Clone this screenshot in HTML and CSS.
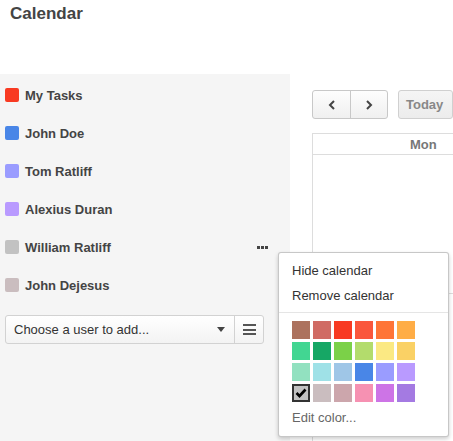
FILE: index.html
```html
<!DOCTYPE html>
<html>
<head>
<meta charset="utf-8">
<link rel="stylesheet" href="styles.css">
</head>
<body>
<div class="app">
  <header class="header"><h1 class="title">Calendar</h1></header>
  <div class="main">
    <aside class="sidebar">
      <div class="cal-row"><span class="swatch" style="background:#f83a22"></span><span class="name">My Tasks</span></div>
      <div class="cal-row"><span class="swatch" style="background:#4986e7"></span><span class="name">John Doe</span></div>
      <div class="cal-row"><span class="swatch" style="background:#9a9cff"></span><span class="name">Tom Ratliff</span></div>
      <div class="cal-row"><span class="swatch" style="background:#b99aff"></span><span class="name">Alexius Duran</span></div>
      <div class="cal-row"><span class="swatch" style="background:#c2c2c2"></span><span class="name">William Ratliff</span><span class="dots"><i></i><i></i><i></i></span></div>
      <div class="cal-row"><span class="swatch" style="background:#cabdbf"></span><span class="name">John Dejesus</span></div>
      <div class="picker">
        <div class="picker-select"><span class="picker-text">Choose a user to add...</span><span class="caret"></span></div>
        <div class="picker-btn"><span class="burger"><i></i><i></i><i></i></span></div>
      </div>
    </aside>
    <section class="content">
      <div class="toolbar">
        <div class="nav-group">
          <button class="nav-btn"><svg width="8" height="10" viewBox="0 0 8 10"><path d="M6 1 L2 5 L6 9" fill="none" stroke="#444" stroke-width="2"/></svg></button>
          <button class="nav-btn"><svg width="8" height="10" viewBox="0 0 8 10"><path d="M2 1 L6 5 L2 9" fill="none" stroke="#444" stroke-width="2"/></svg></button>
        </div>
        <button class="today">Today</button>
      </div>
      <div class="grid">
        <div class="grid-head"><span class="day">Mon</span></div>
        <div class="grid-row"></div>
        <div class="grid-row2"></div>
      </div>
    </section>
  </div>
  <div class="menu">
    <div class="menu-item">Hide calendar</div>
    <div class="menu-item">Remove calendar</div>
    <div class="menu-sep"></div>
    <div class="colors">
      <span class="c" style="background:#ac725e"></span>
      <span class="c" style="background:#d06b64"></span>
      <span class="c" style="background:#f83a22"></span>
      <span class="c" style="background:#fa573c"></span>
      <span class="c" style="background:#ff7537"></span>
      <span class="c" style="background:#ffad46"></span>
      <span class="c" style="background:#42d692"></span>
      <span class="c" style="background:#16a765"></span>
      <span class="c" style="background:#7bd148"></span>
      <span class="c" style="background:#b3dc6c"></span>
      <span class="c" style="background:#fbe983"></span>
      <span class="c" style="background:#fad165"></span>
      <span class="c" style="background:#92e1c0"></span>
      <span class="c" style="background:#9fe1e7"></span>
      <span class="c" style="background:#9fc6e7"></span>
      <span class="c" style="background:#4986e7"></span>
      <span class="c" style="background:#9a9cff"></span>
      <span class="c" style="background:#b99aff"></span>
      <span class="c selected" style="background:#c2c2c2"><svg width="12" height="10" viewBox="0 0 12 10"><path d="M1.5 5 L4.5 8 L10.5 1.5" fill="none" stroke="#000" stroke-width="2.6"/></svg></span>
      <span class="c" style="background:#cabdbf"></span>
      <span class="c" style="background:#cca6ac"></span>
      <span class="c" style="background:#f691b2"></span>
      <span class="c" style="background:#cd74e6"></span>
      <span class="c" style="background:#a47ae2"></span>
    </div>
    <div class="menu-item edit">Edit color...</div>
  </div>
</div>
</body>
</html>
```
FILE: styles.css
```css
* { box-sizing: border-box; }
html, body { margin: 0; padding: 0; }
body {
  font-family: "Liberation Sans", Arial, sans-serif;
  font-size: 13px;
  color: #333;
  background: #fff;
  width: 453px;
  height: 441px;
  overflow: hidden;
}
.app { position: relative; width: 453px; height: 441px; display: flex; flex-direction: column; }
.header { height: 74px; padding: 4px 0 0 10px; }
.title { margin: 0; font-size: 17px; font-weight: bold; color: #444; line-height: 20px; }
.main { flex: 1; display: flex; min-height: 0; }
.sidebar { width: 290px; background: #f5f5f5; padding: 2px 0 0 5px; }
.cal-row { height: 38px; display: flex; align-items: center; padding-right: 22px; }
.swatch { width: 14px; height: 14px; border-radius: 2px; margin-right: 6px; flex: none; }
.name { font-weight: bold; color: #444; font-size: 13px; }
.dots { margin-left: auto; display: flex; gap: 1px; }
.dots i { width: 3px; height: 3px; background: #444; display: block; }
.picker { margin-top: 11px; width: 259px; height: 29px; display: flex; border: 1px solid #d2d2d2; border-radius: 3px; background: linear-gradient(#ffffff, #f3f3f3); }
.picker-select { flex: 1; display: flex; align-items: center; padding: 0 9px 0 8px; border-right: 1px solid #d2d2d2; }
.picker-text { color: #333; font-size: 13px; }
.caret { margin-left: auto; width: 0; height: 0; border-left: 4px solid transparent; border-right: 4px solid transparent; border-top: 5px solid #444; }
.picker-btn { width: 28px; display: flex; align-items: center; justify-content: center; }
.burger { display: flex; flex-direction: column; gap: 2.5px; }
.burger i { display: block; width: 13px; height: 2px; background: #555; }
.content { flex: 1; padding: 16px 0 0 22px; overflow: hidden; }
.toolbar { display: flex; gap: 10px; height: 29px; }
.nav-group { display: flex; border: 1px solid #c8c8c8; border-radius: 3px; background: linear-gradient(#fdfdfd, #f0f0f0); }
.nav-btn { width: 37px; height: 27px; border: 0; background: transparent; padding: 0; display: flex; align-items: center; justify-content: center; }
.nav-btn + .nav-btn { border-left: 1px solid #c8c8c8; }
.today { width: 56px; height: 29px; border: 1px solid #d0d0d0; border-radius: 3px; background: linear-gradient(#f5f5f5, #ececec); font-family: "Liberation Sans", Arial, sans-serif; font-size: 13px; font-weight: bold; color: #888; text-align: left; padding: 0 0 0 7px; }
.grid { margin-top: 14px; width: 300px; height: 320px; border-top: 1px solid #ddd; border-left: 1px solid #ddd; }
.grid-head { height: 21px; border-bottom: 1px solid #ddd; display: flex; align-items: center; padding-left: 97px; }
.day { font-weight: bold; color: #777; font-size: 13px; }
.grid-row { height: 139px; border-bottom: 1px solid #ddd; }
.menu { position: absolute; left: 278px; top: 252px; width: 171px; height: 185px; background: #fff; border: 1px solid rgba(0,0,0,0.22); border-radius: 3px; box-shadow: 0 2px 4px rgba(0,0,0,0.2); padding-top: 5px; }
.menu-item { height: 25px; line-height: 25px; padding-left: 13px; color: #333; font-size: 13px; }
.menu-sep { height: 1px; background: #e5e5e5; margin-top: 4px; }
.colors { margin: 8px 0 0 13px; display: grid; grid-template-columns: repeat(6, 18px); gap: 3px; }
.c { width: 18px; height: 18px; display: flex; align-items: center; justify-content: center; }
.c.selected { border: 2px solid #333; }
.edit { margin-top: 3px; color: #666; }
```
